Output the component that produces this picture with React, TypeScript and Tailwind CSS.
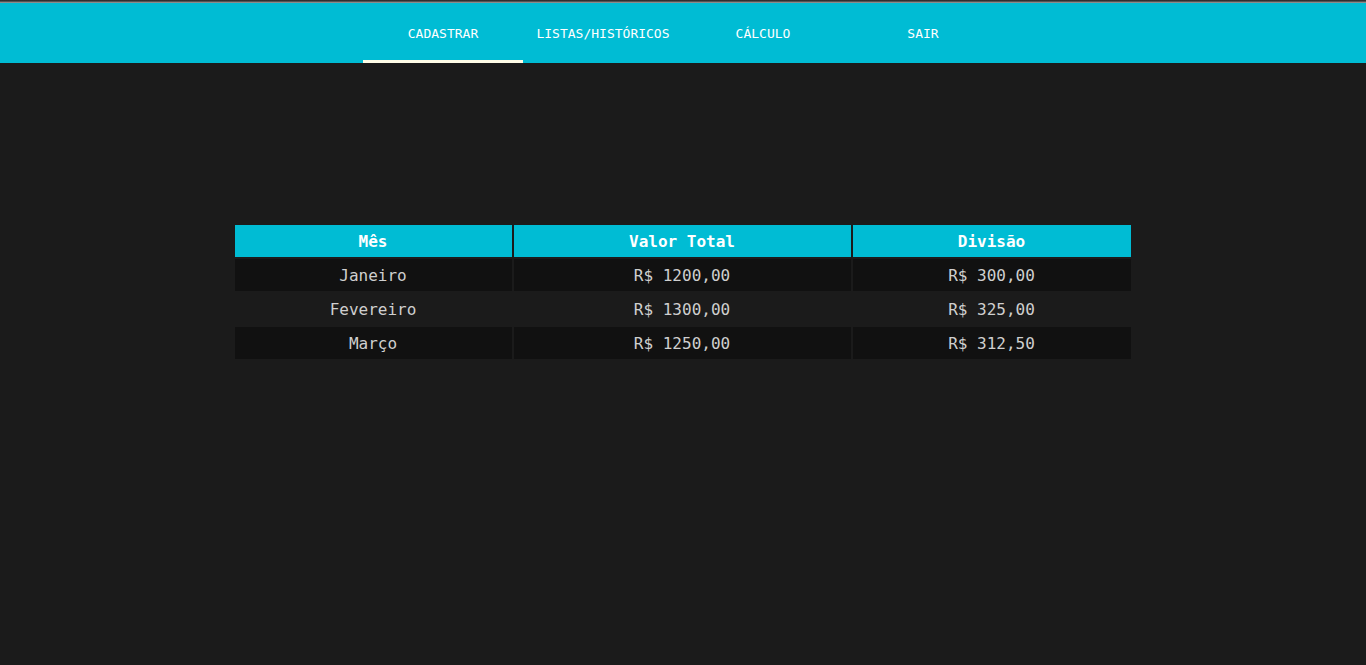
import React from "react";

const tabs = ["CADASTRAR", "LISTAS/HISTÓRICOS", "CÁLCULO", "SAIR"];
const rows = [
  ["Janeiro", "R$ 1200,00", "R$ 300,00"],
  ["Fevereiro", "R$ 1300,00", "R$ 325,00"],
  ["Março", "R$ 1250,00", "R$ 312,50"],
];

export default function App() {
  return (
    <div className="min-h-[665px] w-full bg-[#1b1b1b] font-['DejaVu_Sans_Mono',monospace]">
      <div className="h-[3px] w-full bg-gradient-to-b from-[#1e1e1e] via-[#555] to-[#a8a8a8]" />
      <div className="flex h-[60px] w-full justify-center bg-[#00bcd4]">
        {tabs.map((t, i) => (
          <div key={t} className="relative flex w-[160px] items-center justify-center pt-[2px] text-[13px] text-white">
            {t}
            {i === 0 && <div className="absolute bottom-0 left-0 h-[3px] w-full bg-[#fffde7]" />}
          </div>
        ))}
      </div>
      <div className="flex justify-center pt-[162px] pr-[1px]">
        <div className="flex w-[896px] flex-col gap-[2px]">
          <div className="flex h-[32px] gap-[2px] text-[16px] font-bold text-white">
            <div className="flex w-[277px] items-center justify-center bg-[#00bcd4] pt-[2px]">Mês</div>
            <div className="flex w-[337px] items-center justify-center bg-[#00bcd4] pt-[2px]">Valor Total</div>
            <div className="flex w-[278px] items-center justify-center bg-[#00bcd4] pt-[2px]">Divisão</div>
          </div>
          {rows.map((r, i) => (
            <div key={r[0]} className="flex h-[32px] gap-[2px] text-[16px] text-[#cfcfcf]">
              {r.map((c, j) => (
                <div
                  key={j}
                  className={`flex items-center justify-center pt-[2px] ${j === 0 ? "w-[277px]" : j === 1 ? "w-[337px]" : "w-[278px]"} ${i % 2 === 0 ? "bg-[#111111]" : "bg-[#1b1b1b]"}`}
                >
                  {c}
                </div>
              ))}
            </div>
          ))}
        </div>
      </div>
    </div>
  );
}
